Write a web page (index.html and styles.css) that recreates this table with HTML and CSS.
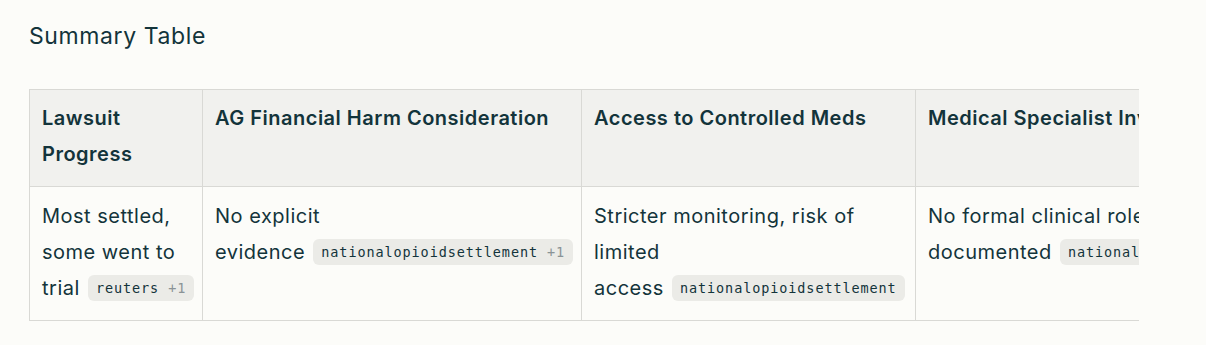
FILE: index.html
```html
<!DOCTYPE html>
<html lang="en">
<head>
    <meta charset="UTF-8">
    <meta name="viewport" content="width=device-width, initial-scale=1.0">
    <title>Summary Table</title>
    <link rel="stylesheet" href="styles.css">
</head>
<body>
    <div class="page">
        <h2 class="section-title">Summary Table</h2>

        <div class="table-wrap">
            <table class="summary">
                <thead>
                    <tr>
                        <th class="col-1">Lawsuit Progress</th>
                        <th class="col-2">AG Financial Harm Consideration</th>
                        <th class="col-3">Access to Controlled Meds</th>
                        <th class="col-4">Medical Specialist Involvement</th>
                    </tr>
                </thead>
                <tbody>
                    <tr>
                        <td>Most settled, some went to <span class="keep">trial <span class="cite">reuters <span class="more">+1</span></span></span></td>
                        <td>No explicit <span class="keep">evidence <span class="cite">nationalopioidsettlement <span class="more">+1</span></span></span></td>
                        <td>Stricter monitoring, risk of limited <span class="keep">access <span class="cite">nationalopioidsettlement</span></span></td>
                        <td>No formal clinical role <span class="keep">documented <span class="cite">nationalopioidsettlement</span></span></td>
                    </tr>
                </tbody>
            </table>
        </div>
    </div>
</body>
</html>
```

FILE: styles.css
```css
body {
    margin: 0;
    padding: 0;
    background-color: #fcfcf9;
    color: #13343b;
    font-family: 'Inter', 'Liberation Sans', sans-serif;
}
.page {
    padding: 22px 29px;
}
.section-title {
    margin: 0 0 39px 0;
    font-size: 23px;
    font-weight: 400;
    line-height: 28px;
    letter-spacing: 0.6px;
}
.table-wrap {
    width: 1110px;
    overflow: hidden;
}
.summary {
    border-collapse: collapse;
    table-layout: fixed;
    width: 1220px;
    font-size: 20px;
    line-height: 36px;
    letter-spacing: 0.5px;
}
.summary th,
.summary td {
    border: 1px solid #d9d9d5;
    text-align: left;
    vertical-align: top;
}
.summary th {
    padding: 10px 12px 14px;
    background-color: #f1f1ee;
    font-weight: 600;
}
.summary td {
    padding: 11px 12px 14px;
}
.col-1 { width: 148px; }
.col-2 { width: 354px; }
.col-3 { width: 309px; }
.col-4 { width: 340px; }
.keep {
    white-space: nowrap;
}
.cite {
    display: inline-block;
    margin-left: 2px;
    padding: 0 8px;
    background-color: #ebebe7;
    border-radius: 6px;
    font-family: 'DejaVu Sans Mono', monospace;
    font-size: 13.5px;
    line-height: 26px;
    letter-spacing: 0.9px;
    vertical-align: 2px;
}
.more {
    color: #8a9396;
}
```
